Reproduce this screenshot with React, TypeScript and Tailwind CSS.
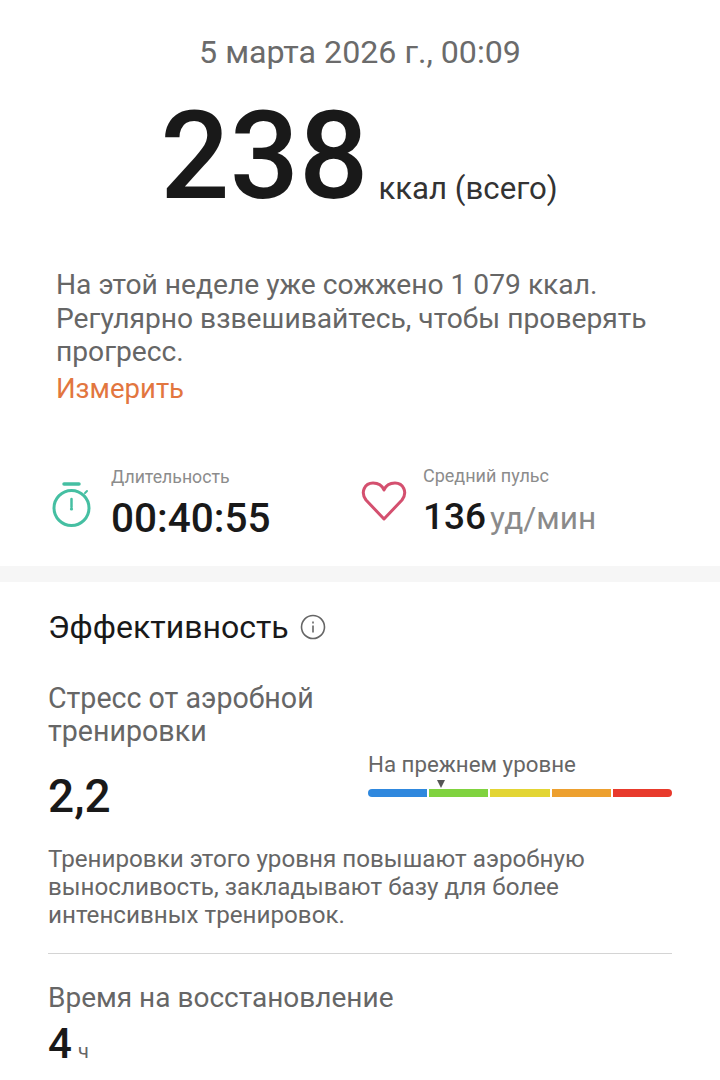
export default function App() {
  return (
    <div className="w-[720px] h-[1080px] overflow-hidden bg-white font-['Roboto','Noto_Sans',sans-serif] text-[#191919]">
      <div className="h-[566px] flex flex-col">
        <div className="pt-[33px] text-center text-[32.2px] leading-[38px] text-[#6b6b6b]">5 марта 2026 г., 00:09</div>
        <div className="mt-[21px] flex items-end justify-center pr-[2px]">
          <span className="text-[122px] leading-[130px] font-medium">238</span>
          <span className="ml-[10px] mb-[15px] text-[31.2px] leading-[36px] text-[#333]">ккал (всего)</span>
        </div>
        <div className="mt-[46px] pl-[56px] text-[28.2px] leading-[33.5px] text-[#666]">
          <p>На этой неделе уже сожжено 1 079 ккал.</p>
          <p>Регулярно взвешивайтесь, чтобы проверять</p>
          <p>прогресс.</p>
          <p className="mt-[3px] text-[27.5px] text-[#e2763f]">Измерить</p>
        </div>
        <div className="mt-[60px] flex">
          <div className="w-[305px] pl-[52px] flex items-center gap-[20px]">
            <svg width="39" height="46" viewBox="0 0 39 46" fill="none" stroke="#45bfa2" strokeWidth="3" strokeLinecap="round" className="mt-[3px]">
              <circle cx="19.5" cy="26" r="17.5" />
              <path d="M12 2h15" strokeWidth="3.5" />
              <path d="M19.5 17v8" strokeWidth="2.5" />
              <circle cx="19.5" cy="27" r="1.6" fill="#45bfa2" stroke="none" />
              <path d="M33 11l2-2" strokeWidth="2" />
            </svg>
            <div>
              <div className="text-[17.7px] leading-[22px] text-[#8c8c8c]">Длительность</div>
              <div className="mt-[8px] text-[40.5px] leading-[44px] font-medium">00:40:55</div>
            </div>
          </div>
          <div className="pl-[56px] flex items-center gap-[16px]">
            <svg width="46" height="42" viewBox="0 0 46 42" fill="none" stroke="#d4506f" strokeWidth="3" strokeLinejoin="round" className="mb-[5px]">
              <path d="M23 39 5 20C-1 12 4 3 12 3c5 0 9 2 11 7 2-5 6-7 11-7 8 0 13 9 7 17L23 39Z" />
            </svg>
            <div>
              <div className="text-[18px] leading-[22px] text-[#8c8c8c]">Средний пульс</div>
              <div className="mt-[8px] text-[37px] leading-[44px] font-medium">136<span className="ml-[4px] text-[31.6px] font-normal text-[#8a8a8a]">уд/мин</span></div>
            </div>
          </div>
        </div>
      </div>
      <div className="h-[16px] bg-[#f6f6f6]" />
      <div className="px-[48px] pt-[26px]">
        <div className="flex items-center gap-[11px] text-[32px] leading-[38px]">
          Эффективность
          <svg width="26" height="26" viewBox="0 0 26 26" fill="none" stroke="#666" strokeWidth="1.6">
            <circle cx="13" cy="13" r="11.5" />
            <path d="M13 11.5v7M13 7.5v2" />
          </svg>
        </div>
        <div className="mt-[36px] flex">
          <div className="w-[320px]">
            <div className="text-[28.6px] leading-[33px] text-[#666]">Стресс от аэробной<br />тренировки</div>
            <div className="mt-[21px] text-[46px] leading-[54px] font-medium">2,2</div>
          </div>
          <div className="pt-[69px] w-[304px]">
            <div className="text-[22.3px] leading-[26px] text-[#666]">На прежнем уровне</div>
            <div className="relative mt-[12px] flex gap-[2px] h-[8px]">
              <span className="absolute left-[69px] -top-[9px] w-0 h-0 border-x-[4px] border-x-transparent border-t-[8px] border-t-[#555]" />
              <div className="flex-1 bg-[#2f88de] rounded-l-full" />
              <div className="flex-1 bg-[#80d33f]" />
              <div className="flex-1 bg-[#e3d534]" />
              <div className="flex-1 bg-[#eda02f]" />
              <div className="flex-1 bg-[#e83a2c] rounded-r-full" />
            </div>
          </div>
        </div>
        <div className="mt-[22px] text-[24.2px] leading-[28px] text-[#666]">
          <p>Тренировки этого уровня повышают аэробную</p>
          <p>выносливость, закладывают базу для более</p>
          <p>интенсивных тренировок.</p>
        </div>
        <div className="mt-[24px] w-[624px] h-px bg-[#d4d4d4]" />
        <div className="mt-[27px] text-[28px] leading-[34px] text-[#666]">Время на восстановление</div>
        <div className="flex items-baseline mt-[4px]">
          <span className="text-[42px] leading-[50px] font-medium">4</span>
          <span className="ml-[6px] text-[20px] text-[#666]">ч</span>
        </div>
      </div>
    </div>
  )
}
